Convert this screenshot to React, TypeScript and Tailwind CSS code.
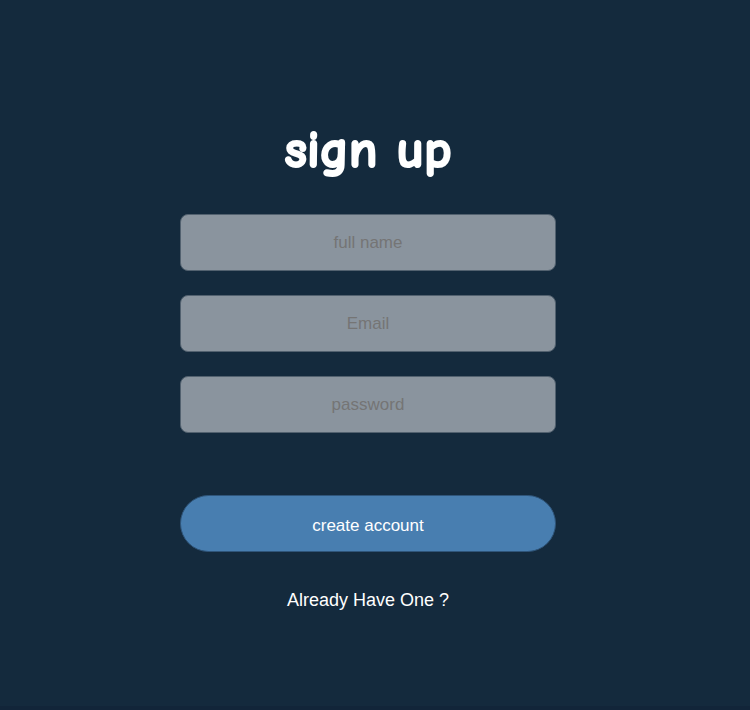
export default function App() {
  const field =
    "h-[57px] w-full rounded-lg border border-[#52616f] bg-[#8a949e] text-center text-[17px] text-[#757575] outline-none placeholder:text-[#757575]";
  return (
    <main className="flex min-h-screen flex-col items-center border-b-4 border-[#122539] bg-[#142a3d] pt-[118px] pr-[14px] font-['Liberation_Sans',Arial,sans-serif] text-white">
      <form className="flex w-1/2 min-w-[376px] flex-col items-center" onSubmit={(e) => e.preventDefault()}>
        <h1 className="mb-8 font-['Comic_Neue','Comic_Sans_MS',Lato,sans-serif] text-[53px] leading-16 font-bold [-webkit-text-stroke:2px_white] [paint-order:stroke_fill]">sign up</h1>
        <div className="flex w-full flex-col gap-6">
          <input className={field} type="text" aria-label="full name" placeholder="full name" />
          <input className={field} type="email" aria-label="Email" placeholder="Email" />
          <input className={field} type="password" aria-label="password" placeholder="password" />
        </div>
        <button className="mt-[62px] h-[57px] w-full rounded-full border border-[#2f557a] bg-[#487eb0] pt-1 text-[17px]" type="submit">create account</button>
        <a className="mt-9 text-lg leading-6" href="#">Already Have One ?</a>
      </form>
    </main>
  );
}
